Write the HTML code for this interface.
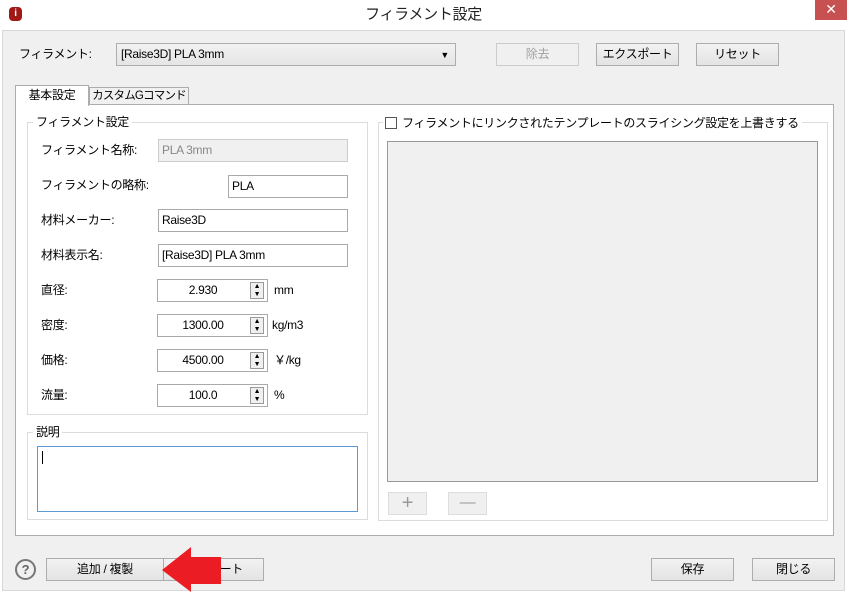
<!DOCTYPE html>
<html><head><meta charset="utf-8"><style>
*{box-sizing:border-box;margin:0;padding:0}
body{width:847px;height:595px;overflow:hidden;background:#fff;font-family:"Liberation Sans","Noto Sans CJK JP",sans-serif;font-size:12px;color:#000;position:relative;white-space:nowrap;letter-spacing:-0.3px}
.a{position:absolute}
.btn{position:absolute;background:linear-gradient(#f2f2f2,#e3e3e3);border:1px solid #adadad;text-align:center;line-height:20px;font-size:12px}
.in{position:absolute;background:#fff;border:1px solid #aaa;height:23px;line-height:20px;padding-left:3px}
.grp{position:absolute;border:1px solid #dcdcdc}
.lbl{position:absolute;font-size:12px;line-height:14px}
.spin{position:absolute;width:111px;height:23px;border:1px solid #aaa;background:#fff}
.spin span{position:absolute;left:0;width:90px;text-align:center;top:3px;line-height:14px}
.spin i{position:absolute;right:3px;top:2px;width:14px;height:17px;border:1px solid #999;background:#f0f0f0;font-style:normal;font-size:7px;line-height:8px;text-align:center}
</style></head><body>
<div class="a" style="left:0;top:0;width:847px;height:30px;background:#fff"></div>
<div class="a" style="left:9px;top:7px;width:13px;height:14px;border-radius:4px;background:#a01818;color:#fff;font-size:10px;font-weight:bold;text-align:center;line-height:14px">i</div>
<div class="a" style="left:0;top:5px;width:847px;text-align:center;font-size:15px;line-height:20px;color:#222">フィラメント設定</div>
<div class="a" style="left:815px;top:0;width:32px;height:20px;background:#c75050;color:#fff;text-align:center;font-size:14px;line-height:19px">✕</div>
<div class="a" style="left:2px;top:30px;width:843px;height:561px;background:#f0f0f0;border:1px solid #d8d8d8"></div>

<div class="lbl" style="left:19px;top:47px">フィラメント:</div>
<div class="a" style="left:116px;top:43px;width:340px;height:23px;border:1px solid #adadad;background:linear-gradient(#f2f2f2,#e5e5e5);padding:3px 4px;line-height:15px">[Raise3D] PLA 3mm<span style="position:absolute;right:6px;top:4px;font-size:9px">▼</span></div>
<div class="btn" style="left:496px;top:43px;width:83px;height:23px;color:#a0a0a0;border-color:#ccc;background:#f0f0f0">除去</div>
<div class="btn" style="left:596px;top:43px;width:83px;height:23px">エクスポート</div>
<div class="btn" style="left:696px;top:43px;width:83px;height:23px">リセット</div>

<div class="a" style="left:15px;top:104px;width:819px;height:432px;background:#fff;border:1px solid #adadad"></div>
<div class="a" style="left:15px;top:85px;width:74px;height:21px;background:#fff;border:1px solid #adadad;border-bottom:none;text-align:center;line-height:19px">基本設定</div>
<div class="a" style="left:89px;top:87px;width:100px;height:18px;background:#f0f0f0;border:1px solid #adadad;text-align:center;line-height:16px;letter-spacing:-0.8px;font-size:11.5px">カスタムGコマンド</div>

<div class="grp" style="left:27px;top:122px;width:341px;height:293px"></div>
<div class="lbl" style="left:33px;top:115px;background:#fff;padding:0 3px">フィラメント設定</div>
<div class="lbl" style="left:41px;top:143px">フィラメント名称:</div>
<div class="in" style="left:158px;top:139px;width:190px;background:#f0f0f0;border-color:#ccc;color:#888">PLA 3mm</div>
<div class="lbl" style="left:41px;top:178px">フィラメントの略称:</div>
<div class="in" style="left:228px;top:175px;width:120px">PLA</div>
<div class="lbl" style="left:41px;top:213px">材料メーカー:</div>
<div class="in" style="left:158px;top:209px;width:190px">Raise3D</div>
<div class="lbl" style="left:41px;top:248px">材料表示名:</div>
<div class="in" style="left:158px;top:244px;width:190px">[Raise3D] PLA 3mm</div>
<div class="lbl" style="left:41px;top:283px">直径:</div>
<div class="spin" style="left:157px;top:279px"><span>2.930</span><i>▲<br>▼</i></div><div class="lbl" style="left:274px;top:283px">mm</div>
<div class="lbl" style="left:41px;top:318px">密度:</div>
<div class="spin" style="left:157px;top:314px"><span>1300.00</span><i>▲<br>▼</i></div><div class="lbl" style="left:272px;top:318px">kg/m3</div>
<div class="lbl" style="left:41px;top:353px">価格:</div>
<div class="spin" style="left:157px;top:349px"><span>4500.00</span><i>▲<br>▼</i></div><div class="lbl" style="left:274px;top:353px">￥/kg</div>
<div class="lbl" style="left:41px;top:388px">流量:</div>
<div class="spin" style="left:157px;top:384px"><span>100.0</span><i>▲<br>▼</i></div><div class="lbl" style="left:274px;top:388px">%</div>

<div class="grp" style="left:27px;top:432px;width:341px;height:88px"></div>
<div class="lbl" style="left:33px;top:425px;background:#fff;padding:0 3px">説明</div>
<div class="a" style="left:37px;top:446px;width:321px;height:66px;border:1px solid #5b9bd5;background:#fff"><div style="position:absolute;left:4px;top:4px;width:1px;height:13px;background:#000"></div></div>

<div class="grp" style="left:378px;top:122px;width:450px;height:399px"></div>
<div class="lbl" style="left:383px;top:116px;background:#fff;padding:0 3px 0 2px"><span style="display:inline-block;width:12px;height:12px;border:1px solid #555;vertical-align:-2px;margin-right:5px"></span>フィラメントにリンクされたテンプレートのスライシング設定を上書きする</div>
<div class="a" style="left:387px;top:141px;width:431px;height:341px;background:#f0f0f0;border:1px solid #999"></div>
<div class="btn" style="left:388px;top:492px;width:39px;height:23px;background:#f0f0f0;border-color:#ddd;color:#999;font-size:20px;line-height:20px">+</div>
<div class="btn" style="left:448px;top:492px;width:39px;height:23px;background:#f0f0f0;border-color:#ddd;color:#999;font-size:16px;line-height:20px">—</div>

<div class="a" style="left:15px;top:559px;width:21px;height:21px;border:2px solid #777;border-radius:50%;text-align:center;line-height:17px;color:#666;font-weight:bold;font-size:13px">?</div>
<div class="btn" style="left:46px;top:558px;width:118px;height:23px">追加 / 複製</div>
<div class="btn" style="left:163px;top:558px;width:101px;height:23px;text-align:right;padding-right:20px">ポート</div>
<svg class="a" style="left:160px;top:547px" width="62" height="46"><polygon points="2,23 31,0 31,10 61,10 61,37 31,37 31,45" fill="#ec1c24"/></svg>
<div class="btn" style="left:651px;top:558px;width:83px;height:23px">保存</div>
<div class="btn" style="left:752px;top:558px;width:83px;height:23px">閉じる</div>
</body></html>
